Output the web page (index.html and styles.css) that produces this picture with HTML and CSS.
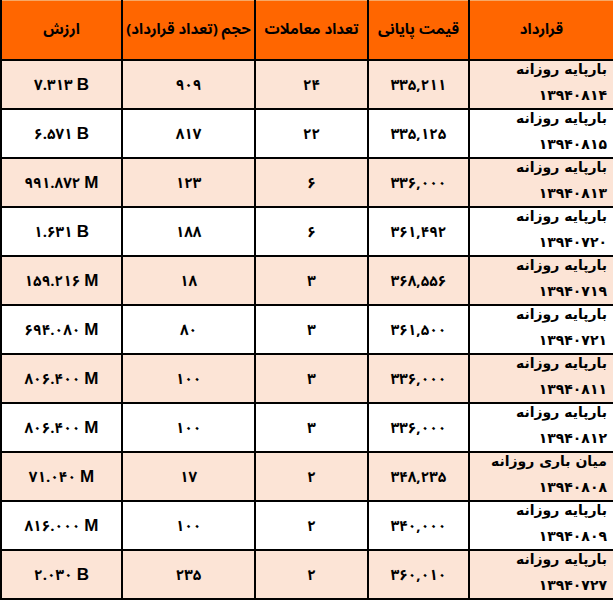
FILE: index.html
```html
<!DOCTYPE html>
<html lang="fa" dir="rtl">
<head>
<meta charset="utf-8">
<link rel="stylesheet" href="styles.css">
</head>
<body>
<div class="grid">
  <div class="cell head">قرارداد</div>
  <div class="cell head">قیمت پایانی</div>
  <div class="cell head">تعداد معاملات</div>
  <div class="cell head">حجم (تعداد قرارداد)</div>
  <div class="cell head">ارزش</div>

  <div class="cell name alt"><div class="lines"><div>بارپایه روزانه</div><div>۱۳۹۴۰۸۱۴</div></div></div>
  <div class="cell alt"><span class="num">۳۳۵,۲۱۱</span></div>
  <div class="cell alt"><span class="num">۲۴</span></div>
  <div class="cell alt"><span class="num">۹۰۹</span></div>
  <div class="cell alt"><span class="val"><span class="num">۷.۳۱۳</span> <span class="unit">B</span></span></div>

  <div class="cell name"><div class="lines"><div>بارپایه روزانه</div><div>۱۳۹۴۰۸۱۵</div></div></div>
  <div class="cell"><span class="num">۳۳۵,۱۲۵</span></div>
  <div class="cell"><span class="num">۲۲</span></div>
  <div class="cell"><span class="num">۸۱۷</span></div>
  <div class="cell"><span class="val"><span class="num">۶.۵۷۱</span> <span class="unit">B</span></span></div>

  <div class="cell name alt"><div class="lines"><div>بارپایه روزانه</div><div>۱۳۹۴۰۸۱۳</div></div></div>
  <div class="cell alt"><span class="num">۳۳۶,۰۰۰</span></div>
  <div class="cell alt"><span class="num">۶</span></div>
  <div class="cell alt"><span class="num">۱۲۳</span></div>
  <div class="cell alt"><span class="val"><span class="num">۹۹۱.۸۷۲</span> <span class="unit">M</span></span></div>

  <div class="cell name"><div class="lines"><div>بارپایه روزانه</div><div>۱۳۹۴۰۷۲۰</div></div></div>
  <div class="cell"><span class="num">۳۶۱,۴۹۲</span></div>
  <div class="cell"><span class="num">۶</span></div>
  <div class="cell"><span class="num">۱۸۸</span></div>
  <div class="cell"><span class="val"><span class="num">۱.۶۳۱</span> <span class="unit">B</span></span></div>

  <div class="cell name alt"><div class="lines"><div>بارپایه روزانه</div><div>۱۳۹۴۰۷۱۹</div></div></div>
  <div class="cell alt"><span class="num">۳۶۸,۵۵۶</span></div>
  <div class="cell alt"><span class="num">۳</span></div>
  <div class="cell alt"><span class="num">۱۸</span></div>
  <div class="cell alt"><span class="val"><span class="num">۱۵۹.۲۱۶</span> <span class="unit">M</span></span></div>

  <div class="cell name"><div class="lines"><div>بارپایه روزانه</div><div>۱۳۹۴۰۷۲۱</div></div></div>
  <div class="cell"><span class="num">۳۶۱,۵۰۰</span></div>
  <div class="cell"><span class="num">۳</span></div>
  <div class="cell"><span class="num">۸۰</span></div>
  <div class="cell"><span class="val"><span class="num">۶۹۴.۰۸۰</span> <span class="unit">M</span></span></div>

  <div class="cell name alt"><div class="lines"><div>بارپایه روزانه</div><div>۱۳۹۴۰۸۱۱</div></div></div>
  <div class="cell alt"><span class="num">۳۳۶,۰۰۰</span></div>
  <div class="cell alt"><span class="num">۳</span></div>
  <div class="cell alt"><span class="num">۱۰۰</span></div>
  <div class="cell alt"><span class="val"><span class="num">۸۰۶.۴۰۰</span> <span class="unit">M</span></span></div>

  <div class="cell name"><div class="lines"><div>بارپایه روزانه</div><div>۱۳۹۴۰۸۱۲</div></div></div>
  <div class="cell"><span class="num">۳۳۶,۰۰۰</span></div>
  <div class="cell"><span class="num">۳</span></div>
  <div class="cell"><span class="num">۱۰۰</span></div>
  <div class="cell"><span class="val"><span class="num">۸۰۶.۴۰۰</span> <span class="unit">M</span></span></div>

  <div class="cell name alt"><div class="lines"><div>میان باری روزانه</div><div>۱۳۹۴۰۸۰۸</div></div></div>
  <div class="cell alt"><span class="num">۳۴۸,۲۳۵</span></div>
  <div class="cell alt"><span class="num">۲</span></div>
  <div class="cell alt"><span class="num">۱۷</span></div>
  <div class="cell alt"><span class="val"><span class="num">۷۱.۰۴۰</span> <span class="unit">M</span></span></div>

  <div class="cell name"><div class="lines"><div>بارپایه روزانه</div><div>۱۳۹۴۰۸۰۹</div></div></div>
  <div class="cell"><span class="num">۳۴۰,۰۰۰</span></div>
  <div class="cell"><span class="num">۲</span></div>
  <div class="cell"><span class="num">۱۰۰</span></div>
  <div class="cell"><span class="val"><span class="num">۸۱۶.۰۰۰</span> <span class="unit">M</span></span></div>

  <div class="cell name alt"><div class="lines"><div>بارپایه روزانه</div><div>۱۳۹۴۰۷۲۷</div></div></div>
  <div class="cell alt"><span class="num">۳۶۰,۰۱۰</span></div>
  <div class="cell alt"><span class="num">۲</span></div>
  <div class="cell alt"><span class="num">۲۳۵</span></div>
  <div class="cell alt"><span class="val"><span class="num">۲.۰۳۰</span> <span class="unit">B</span></span></div>
</div>
</body>
</html>
```

FILE: styles.css
```css
html, body {
  margin: 0;
  padding: 0;
  background: #ffffff;
  overflow: hidden;
}
body {
  font-family: "Noto Sans Arabic", "DejaVu Sans", sans-serif;
  font-weight: bold;
  color: #000;
}
.grid {
  direction: rtl;
  width: 613px;
  box-sizing: border-box;
  display: grid;
  grid-template-columns: 143px 99px 111px 131px 119px;
  grid-template-rows: 59px repeat(11, 47px);
  column-gap: 2px;
  row-gap: 2px;
  padding-left: 2px;
  padding-bottom: 2px;
  background: #000;
}
.cell {
  background: #ffffff;
  display: flex;
  align-items: center;
  justify-content: center;
  font-size: 15px;
  white-space: nowrap;
  overflow: visible;
}
.cell.alt {
  background: #fce4d6;
}
.head {
  background: #ff6600;
  border-top: 1px solid #f7a866;
  box-sizing: border-box;
  font-size: 15px;
  padding-bottom: 2px;
}
.name {
  display: block;
  text-align: right;
  padding-right: 6px;
}
.lines {
  font-family: "DejaVu Sans", sans-serif;
  font-size: 14px;
  line-height: 26px;
  margin-top: -5px;
}
.num {
  direction: ltr;
  unicode-bidi: isolate;
}
.val {
  direction: ltr;
  unicode-bidi: isolate;
  display: inline-flex;
  align-items: baseline;
  gap: 4px;
}
.unit {
  font-family: "Liberation Sans", Arial, sans-serif;
  font-size: 17px;
  font-weight: bold;
}
```
